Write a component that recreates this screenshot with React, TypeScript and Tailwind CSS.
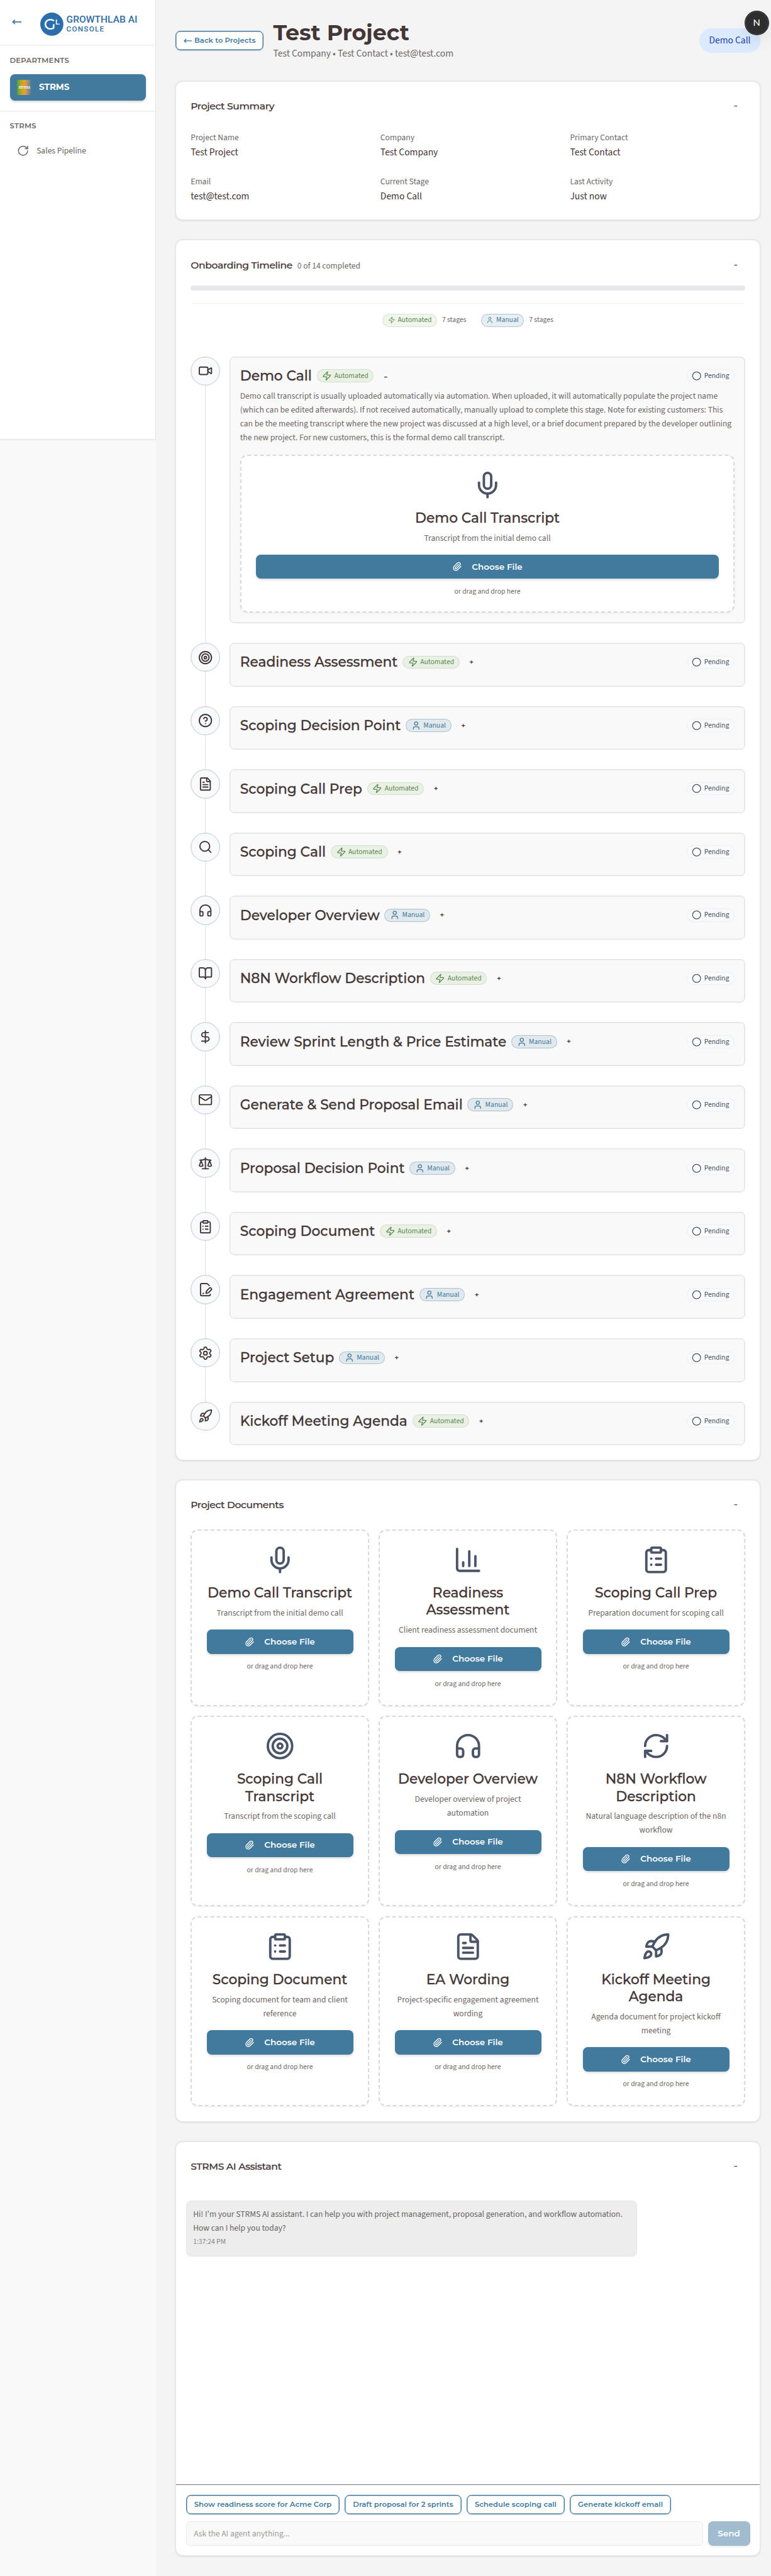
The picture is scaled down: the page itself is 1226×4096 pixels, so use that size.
import React from "react";
import {
  BookOpen, ChartColumn, Circle, CircleHelp, ClipboardList, DollarSign, FilePenLine, FileText,
  Headphones, Mail, Mic, Paperclip, RefreshCw, Rocket, RotateCw, Scale, Search, Settings,
  Target, User, Video, Zap, type LucideIcon,
} from "lucide-react";

const heading = "font-[Montserrat,Inter,sans-serif]";

type Kind = "auto" | "manual";

const stages: { title: string; kind: Kind; icon: LucideIcon }[] = [
  { title: "Demo Call", kind: "auto", icon: Video },
  { title: "Readiness Assessment", kind: "auto", icon: Target },
  { title: "Scoping Decision Point", kind: "manual", icon: CircleHelp },
  { title: "Scoping Call Prep", kind: "auto", icon: FileText },
  { title: "Scoping Call", kind: "auto", icon: Search },
  { title: "Developer Overview", kind: "manual", icon: Headphones },
  { title: "N8N Workflow Description", kind: "auto", icon: BookOpen },
  { title: "Review Sprint Length & Price Estimate", kind: "manual", icon: DollarSign },
  { title: "Generate & Send Proposal Email", kind: "manual", icon: Mail },
  { title: "Proposal Decision Point", kind: "manual", icon: Scale },
  { title: "Scoping Document", kind: "auto", icon: ClipboardList },
  { title: "Engagement Agreement", kind: "manual", icon: FilePenLine },
  { title: "Project Setup", kind: "manual", icon: Settings },
  { title: "Kickoff Meeting Agenda", kind: "auto", icon: Rocket },
];

const documents: { title: string; text: string; icon: LucideIcon }[] = [
  { title: "Demo Call Transcript", text: "Transcript from the initial demo call", icon: Mic },
  { title: "Readiness Assessment", text: "Client readiness assessment document", icon: ChartColumn },
  { title: "Scoping Call Prep", text: "Preparation document for scoping call", icon: ClipboardList },
  { title: "Scoping Call Transcript", text: "Transcript from the scoping call", icon: Target },
  { title: "Developer Overview", text: "Developer overview of project automation", icon: Headphones },
  { title: "N8N Workflow Description", text: "Natural language description of the n8n workflow", icon: RefreshCw },
  { title: "Scoping Document", text: "Scoping document for team and client reference", icon: ClipboardList },
  { title: "EA Wording", text: "Project-specific engagement agreement wording", icon: FileText },
  { title: "Kickoff Meeting Agenda", text: "Agenda document for project kickoff meeting", icon: Rocket },
];

const summary = [
  ["Project Name", "Test Project"],
  ["Company", "Test Company"],
  ["Primary Contact", "Test Contact"],
  ["Email", "test@test.com"],
  ["Current Stage", "Demo Call"],
  ["Last Activity", "Just now"],
];

const prompts = [
  "Show readiness score for Acme Corp",
  "Draft proposal for 2 sprints",
  "Schedule scoping call",
  "Generate kickoff email",
];

function KindChip({ kind, small }: { kind: Kind; small?: boolean }) {
  const Icon = kind === "auto" ? Zap : User;
  const tone =
    kind === "auto"
      ? "border-[#6aaa46]/20 bg-[#6aaa46]/10 text-[#5b8a4c]"
      : "border-[#417a9c]/35 bg-[#417a9c]/12 text-[#417a9c]";
  return (
    <span className={`flex h-[21.5px] shrink-0 items-center gap-1 rounded-full border px-2 text-xs ${tone}`}>
      <Icon size={small ? 12 : 16} strokeWidth={2} />
      {kind === "auto" ? "Automated" : "Manual"}
    </span>
  );
}

function Card({ children, className = "" }: { children: React.ReactNode; className?: string }) {
  return (
    <section
      className={`rounded-xl border border-[#e6e6e6] bg-white shadow-[0_1px_3px_rgba(0,0,0,0.12)] ${className}`}
    >
      {children}
    </section>
  );
}

function CardHeader({ title, note }: { title: string; note?: string }) {
  return (
    <div className="flex h-8 items-center justify-between">
      <div className="flex items-baseline gap-2">
        <h2 className={`${heading} text-base leading-[26px] font-medium tracking-[-0.02em] text-[#433636] [-webkit-text-stroke:0.25px_#433636]`}>{title}</h2>
        {note && <span className="text-sm text-[#6f6868]">{note}</span>}
      </div>
      <span className={`${heading} mr-3 mb-1 text-lg leading-none font-medium text-[#4b5563]`}>-</span>
    </div>
  );
}

function UploadZone({
  title,
  text,
  icon: Icon,
  padding = "p-6",
}: {
  title: string;
  text: string;
  icon: LucideIcon;
  padding?: string;
}) {
  return (
    <div
      className={`rounded-xl border-[2.1px] border-dashed border-[#dadada] bg-white text-center shadow-[0_1px_2px_rgba(0,0,0,0.08)] ${padding}`}
    >
      <Icon size={48} strokeWidth={2} className="mx-auto text-[#4b5567]" />
      <h3 className={`${heading} mt-4 text-[22.4px] leading-7 font-medium text-[#433636] [-webkit-text-stroke:0.3px_#433636]`}>{title}</h3>
      <p className="mt-2 text-sm leading-[22.75px] text-[#6f6868]">{text}</p>
      <button
        className={`${heading} mt-4 flex h-[39.5px] w-full items-center justify-center gap-4 rounded-lg bg-[#417a9c] text-sm font-semibold text-white shadow-[0_2px_4px_rgba(0,0,0,0.15)]`}
      >
        <Paperclip size={16} strokeWidth={2} />
        Choose File
      </button>
      <p className="mt-3 text-xs leading-[19.5px] text-[#6f6868]">or drag and drop here</p>
    </div>
  );
}

function Sidebar() {
  return (
    <aside className="h-[721px] w-64 shrink-0 border-r border-b border-[#e6e6e6] bg-white shadow-[1px_0_3px_rgba(0,0,0,0.08)]">
      <div className="flex h-[75px] items-center border-b-[2.1px] border-[#f2f2f2] pl-5">
        <svg width="17" height="10" viewBox="0 0 17 10" className="text-[#417a9c]">
          <path d="M1.5 5H15.5M5 1.6L1.5 5L5 8.4" fill="none" stroke="currentColor" strokeWidth="1.9" />
        </svg>
        <svg width="38" height="38" viewBox="0 0 38 38" className="mt-1.5 ml-[29px]">
          <circle cx="19" cy="19" r="19" fill="#2a6fab" />
          <text x="6" y="28" fontSize="25" fontFamily="Montserrat, Inter, sans-serif" fontWeight="500" fill="#fff">G</text>
          <text x="24.5" y="20" fontSize="12" fontFamily="Montserrat, Inter, sans-serif" fontWeight="600" fill="#fff">L</text>
        </svg>
        <div className="mt-1.5 ml-[5px] font-[Roboto,sans-serif] text-[#2f6da3]">
          <div className="text-[16px] leading-[16px] font-medium tracking-[0.05px]">GROWTHLAB AI</div>
          <div className="text-[12px] leading-[13px] font-medium tracking-[1.35px]">CONSOLE</div>
        </div>
      </div>
      <div className="border-b-[2.1px] border-[#f2f2f2] px-4 pt-[15px] pb-4">
        <h2 className={`${heading} text-xs leading-[19.5px] font-semibold tracking-[0.25px] text-[#6b6464]`}>DEPARTMENTS</h2>
        <div className="mt-3 flex h-11 items-center gap-3 rounded-lg bg-[#417a9c] px-3 shadow-[0_2px_4px_rgba(0,0,0,0.18)]">
          <span className="flex size-6 items-center justify-center bg-linear-to-r from-[#3aa63a] via-[#f0a01c] to-[#417a9c] text-[8px] leading-none font-semibold text-white">
            strms
          </span>
          <span className={`${heading} text-sm font-bold text-white`}>STRMS</span>
        </div>
      </div>
      <div className="px-4 pt-[14px]">
        <h2 className={`${heading} text-xs leading-[19.5px] font-semibold tracking-[0.25px] text-[#6b6464]`}>STRMS</h2>
        <div className="mt-3 flex h-9 items-center gap-3 px-3 text-sm text-[#6b6464]">
          <RotateCw size={20} strokeWidth={1.8} />
          Sales Pipeline
        </div>
      </div>
    </aside>
  );
}

function Stage({ index }: { index: number }) {
  const { title, kind, icon: Icon } = stages[index];
  const open = index === 0;
  const last = index === stages.length - 1;
  return (
    <div className="flex gap-4">
      <div className="flex flex-col items-center">
        <div className="flex size-12 shrink-0 items-center justify-center rounded-full border border-[#ced3da] bg-[#f9fafb] text-[#433636] shadow-[inset_0_0_0_0.5px_#d1d5db]">
          <Icon size={24} strokeWidth={2} />
        </div>
        {!last && <div className="w-px flex-1 bg-[#e3e3e3]" />}
      </div>
      <div className={last ? "flex-1" : "flex-1 pb-8"}>
        <div
          className={`rounded-lg border border-[#e1e1e1] bg-[#f9f9f9] p-4 shadow-[inset_0_0_0_0.5px_#e3e3e3] ${open ? "" : "h-[71.8px]"}`}
        >
          <div className={`flex items-center ${open ? "h-[29px]" : "h-[30px]"}`}>
            <h3 className={`${heading} mr-2 text-[22.4px] leading-7 font-medium whitespace-nowrap text-[#433636] [-webkit-text-stroke:0.3px_#433636]`}>{title}</h3>
            <KindChip kind={kind} />
            <span
              className={`${heading} ml-4 leading-none text-[#433636] ${open ? "text-lg font-medium" : "text-xs font-semibold"}`}
            >
              {open ? "-" : "+"}
            </span>
            <span className="ml-auto flex h-[21.5px] items-center gap-1 rounded-full border border-[#eeeff2] bg-[#f9fafb] px-2 text-xs text-[#4b5563]">
              <Circle size={16} strokeWidth={2} />
              Pending
            </span>
          </div>
          {open && (
            <>
              <p className="mt-2 mb-4 text-sm leading-[22.75px] text-[#6f6868]">
                Demo call transcript is usually uploaded automatically via automation. When uploaded, it will
                automatically populate the project name (which can be edited afterwards). If not received
                automatically, manually upload to complete this stage. Note for existing customers: This can be the
                meeting transcript where the new project was discussed at a high level, or a brief document prepared
                by the developer outlining the new project. For new customers, this is the formal demo call
                transcript.
              </p>
              <UploadZone {...documents[0]} padding="px-6 pt-[23.5px] pb-[22.3px]" />
            </>
          )}
        </div>
      </div>
    </div>
  );
}

export default function App() {
  return (
    <div className="relative flex h-[4228px] overflow-hidden bg-[#f9f9f9] font-['Source_Sans_3','Noto_Sans',sans-serif] [zoom:0.9688]">
      <Sidebar />
      <main className="min-w-0 flex-1 bg-[#f4f4f4] pt-8 pr-[17.5px] pl-8">
        <header className="flex items-center">
          <button
            className={`${heading} flex h-8 w-[144.5px] items-center justify-center gap-1 rounded-lg border border-[#417a9c] bg-white text-xs font-semibold whitespace-nowrap text-[#417a9c] shadow-[inset_0_0_0_0.5px_#417a9c,0_1px_2px_rgba(0,0,0,0.12)]`}
          >
            <svg width="14" height="8" viewBox="0 0 14 8">
              <path d="M1.2 4H13.5M4.2 1L1.2 4L4.2 7" fill="none" stroke="currentColor" strokeWidth="1.5" />
            </svg>
            Back to Projects
          </button>
          <div className="ml-4">
            <h1 className={`${heading} text-4xl leading-[43.2px] font-bold text-[#433636]`}>Test Project</h1>
            <p className="text-base leading-[26px] text-[#6f6868]">Test Company • Test Contact • test@test.com</p>
          </div>
          <span className="ml-auto rounded-full bg-[#dbeafe] px-4 py-2 text-base leading-[25px] text-[#1e40af]">
            Demo Call
          </span>
        </header>

        <Card className="mt-8 p-6">
          <CardHeader title="Project Summary" />
          <dl className="mt-6 grid grid-cols-3 gap-6">
            {summary.map(([label, value]) => (
              <div key={label}>
                <dt className="text-sm leading-[22.75px] text-[#6f6868]">{label}</dt>
                <dd className="text-base leading-[26px] text-[#433636]">{value}</dd>
              </div>
            ))}
          </dl>
        </Card>

        <Card className="mt-[33px] p-6">
          <CardHeader title="Onboarding Timeline" note="0 of 14 completed" />
          <div className="mt-[18px] h-2 rounded-full bg-[#e5e7eb]" />
          <div className="mt-[21px] flex justify-center gap-6 border-t border-[#f3f3f3] pt-4 text-xs text-[#6f6868]">
            <div className="flex items-center gap-2">
              <KindChip kind="auto" small />7 stages
            </div>
            <div className="flex items-center gap-2">
              <KindChip kind="manual" small />7 stages
            </div>
          </div>
          <div className="mt-[48.8px]">
            {stages.map((stage, index) => (
              <Stage key={stage.title} index={index} />
            ))}
          </div>
        </Card>

        <Card className="mt-8 p-6">
          <CardHeader title="Project Documents" />
          <div className="mt-6 grid grid-cols-3 gap-4">
            {documents.map((doc) => (
              <UploadZone key={doc.title} {...doc} />
            ))}
          </div>
        </Card>

        <Card className="mt-8 flex h-[681px] flex-col">
          <div className="px-6 pt-6">
            <CardHeader title="STRMS AI Assistant" />
          </div>
          <div className="mt-6 flex-1 p-4">
            <div className="w-[80%] rounded-lg border border-[#e6e6e6] bg-[#ededed] px-[11px] pt-[11px] pb-3 text-sm leading-[22.75px] text-[#6b6464]">
              Hi! I'm your STRMS AI assistant. I can help you with project management, proposal generation, and
              workflow automation. How can I help you today?
              <div className="mt-0.5 text-xs leading-[19.5px] text-[#8b8585]">1:37:24 PM</div>
            </div>
          </div>
          <div className="border-t border-[#8f8787] p-4 shadow-[inset_0_0.5px_0_#c9c4c4]">
            <div className="flex gap-2">
              {prompts.map((prompt) => (
                <button
                  key={prompt}
                  className={`${heading} h-8 rounded-lg border border-[#417a9c] bg-white px-[12.6px] text-xs font-semibold whitespace-nowrap text-[#417a9c] shadow-[inset_0_0_0_0.5px_#417a9c,0_1px_2px_rgba(0,0,0,0.1)]`}
                >
                  {prompt}
                </button>
              ))}
            </div>
            <div className="mt-3 flex h-[39.75px] gap-2">
              <div className="flex flex-1 items-center rounded-md border border-[#e9e9e9] bg-[#f9f9f9] px-3 text-sm text-[#a39c9c]">
                Ask the AI agent anything...
              </div>
              <button
                className={`${heading} w-[69px] rounded-lg bg-[#a0bcce] text-sm font-semibold text-white shadow-[0_2px_4px_rgba(0,0,0,0.08)]`}
              >
                Send
              </button>
            </div>
          </div>
        </Card>
      </main>
      <div
        className={`${heading} absolute top-[19px] right-[4.5px] flex size-[38px] items-center justify-center rounded-full border-2 border-[#4a4a4a] bg-[#2e2e2e] text-[15px] font-medium text-white shadow-[0_0_0_1px_#222,0_12px_24px_rgba(0,0,0,0.08)]`}
      >
        N
      </div>
    </div>
  );
}
